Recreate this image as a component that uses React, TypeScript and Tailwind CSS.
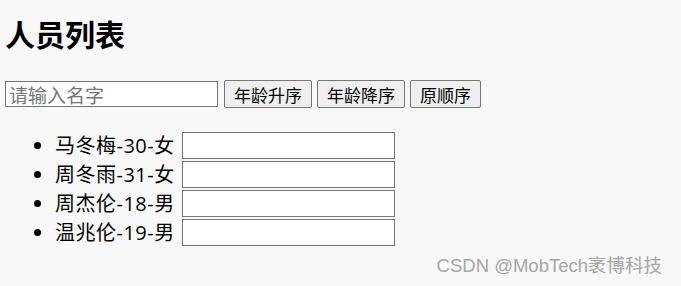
import React, { useState } from "react";

const people = [
  { name: "马冬梅", age: 30, sex: "女" },
  { name: "周冬雨", age: 31, sex: "女" },
  { name: "周杰伦", age: 18, sex: "男" },
  { name: "温兆伦", age: 19, sex: "男" },
];

const font = { fontFamily: '"Noto Sans CJK SC", "Noto Sans", sans-serif' };
const listFont = { fontFamily: '"Open Sans", "Noto Sans CJK SC", sans-serif' };
const markFont = { fontFamily: '"Liberation Sans", "Noto Sans CJK SC", sans-serif' };

const btn =
  "h-[28px] rounded-[2px] border border-[#767676] bg-[#efefef] px-[9px] text-[17px] leading-none";

export default function App() {
  const [keyword, setKeyword] = useState("");
  const [sortType, setSortType] = useState(0);

  let list = people.filter((p) => p.name.includes(keyword));
  if (sortType) list = [...list].sort((a, b) => (sortType === 1 ? a.age - b.age : b.age - a.age));

  return (
    <div
      className="relative h-[286px] w-full overflow-hidden bg-[#f8f8f8] px-[5px] text-black"
      style={font}
    >
      <h2 className="pt-[14px] text-[30px] font-bold leading-[38px]">人员列表</h2>
      <div className="mt-[28px] flex items-center gap-[5px]">
        <input
          className="mr-[1px] h-[26px] w-[213px] border border-[#767676] bg-white px-[3px] text-[19px] leading-none outline-none placeholder:text-[#757575]"
          placeholder="请输入名字"
          value={keyword}
          onChange={(e) => setKeyword(e.target.value)}
        />
        <button className={btn} onClick={() => setSortType(1)}>
          年龄升序
        </button>
        <button className={btn} onClick={() => setSortType(2)}>
          年龄降序
        </button>
        <button className={btn} onClick={() => setSortType(0)}>
          原顺序
        </button>
      </div>
      <ul className="mt-[23px] list-disc pl-[50px]" style={listFont}>
        {list.map((p) => (
          <li key={p.name} className="h-[29px] text-[20px] leading-[29px]">
            <span className="inline-flex items-center gap-[6px] align-top">
              <span className="w-[121px] tracking-[0.5px]">
                {p.name}-{p.age}-{p.sex}
              </span>
              <input className="h-[27px] w-[213px] border border-[#767676] bg-white outline-none" />
            </span>
          </li>
        ))}
      </ul>
      <div
        className="absolute bottom-[6px] right-[19px] text-[18.5px] text-[#a6a6a6]"
        style={markFont}
      >
        CSDN @MobTech袤博科技
      </div>
    </div>
  );
}
